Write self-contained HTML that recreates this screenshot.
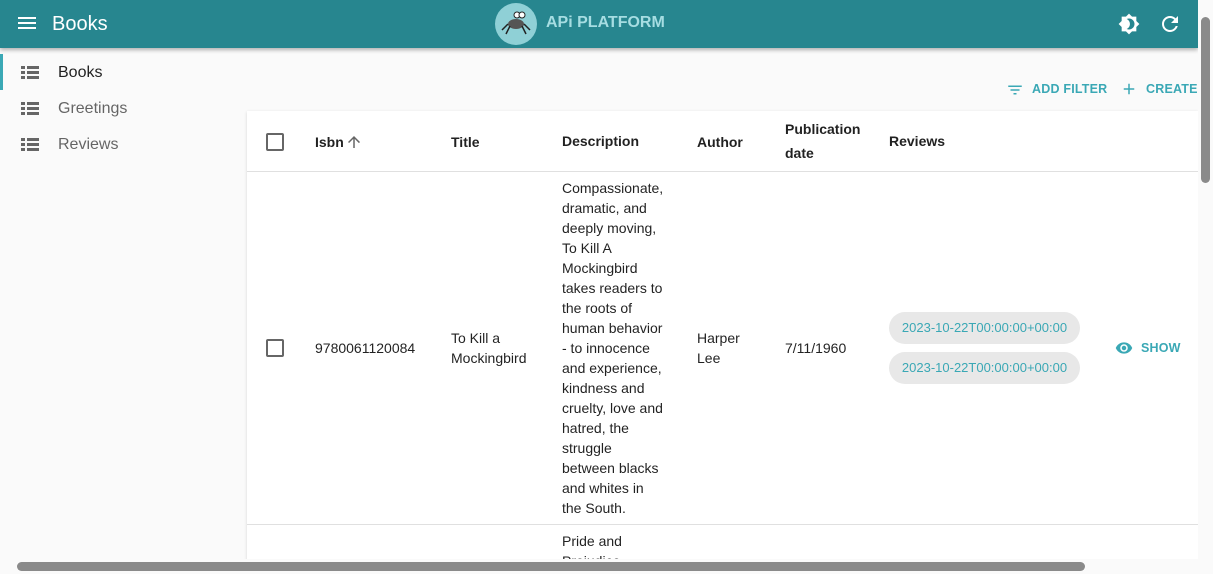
<!DOCTYPE html>
<html><head><meta charset="utf-8"><style>
*{box-sizing:border-box;margin:0;padding:0}
body{width:1213px;height:574px;overflow:hidden;background:#fafafa;font-family:"Liberation Sans",sans-serif;font-size:14px;color:rgba(0,0,0,.87);position:relative}
.hdr{position:absolute;left:0;top:0;width:1198px;height:48px;background:#27868f;box-shadow:0 2px 4px rgba(0,0,0,.3);color:#fff}
.abs{position:absolute}
.nav{position:absolute;left:0;height:36px;width:240px;font-size:16px;color:rgba(0,0,0,.6)}
.nav span{position:absolute;left:58px;top:10px}
.li{position:absolute;left:21px;top:12px;width:18px;height:14px}
.li i{position:absolute;height:3px;background:#666;top:0}
.card{position:absolute;left:247px;top:111px;width:951px;height:460px;background:#fff;box-shadow:0 1px 3px rgba(0,0,0,.15)}
.th{position:absolute;font-weight:bold;color:rgba(0,0,0,.87)}
.cb{position:absolute;width:18px;height:18px;border:2px solid #666;border-radius:2px}
.chip{position:absolute;left:642px;width:191px;height:32px;border-radius:16px;background:#e8e8e8;color:#3aa8b5;font-size:13px;line-height:32px;text-align:center}
.teal{color:#3aa8b5;font-weight:bold;font-size:12.5px;letter-spacing:.2px}
</style></head><body>
<div class="hdr">
 <div class="abs" style="left:18px;top:17px;width:18px;height:2px;background:#fff;box-shadow:0 5px 0 #fff,0 10px 0 #fff"></div>
 <div class="abs" style="left:52px;top:13px;font-size:20px">Books</div>
 <div class="abs" style="left:495px;top:3px;width:42px;height:42px;border-radius:50%;background:#8fd0d6"></div>
 <svg class="abs" style="left:498px;top:8px" width="36" height="30" viewBox="0 0 36 30"><ellipse cx="18" cy="16" rx="8" ry="5" fill="#555"/><circle cx="19" cy="7" r="3" fill="#fff" stroke="#222"/><circle cx="24" cy="7" r="3" fill="#fff" stroke="#222"/><path d="M10 16 L4 22 M12 18 L8 26 M24 18 L28 26 M26 16 L32 22" stroke="#222" stroke-width="1.5" fill="none"/></svg>
 <div class="abs" style="left:546px;top:14px;font-size:16px;font-weight:bold;color:#a6dde2;letter-spacing:0">APi PLATFORM</div>
 <svg class="abs" style="left:1118px;top:13px" width="22" height="22" viewBox="0 0 24 24"><path fill="#fff" d="M20 8.69V4h-4.69L12 .69 8.69 4H4v4.69L.69 12 4 15.31V20h4.69L12 23.31 15.31 20H20v-4.69L23.31 12 20 8.69zM12 18c-.89 0-1.74-.2-2.5-.55C11.56 16.5 13 14.42 13 12s-1.44-4.5-3.5-5.45C10.26 6.2 11.11 6 12 6c3.310 0 6 2.69 6 6s-2.69 6-6 6z"/></svg>
 <svg class="abs" style="left:1158px;top:12px" width="24" height="24" viewBox="0 0 24 24"><path fill="#fff" d="M17.65 6.35C16.2 4.9 14.21 4 12 4c-4.42 0-7.99 3.58-7.99 8s3.57 8 7.99 8c3.73 0 6.84-2.550 7.730-6h-2.08c-.82 2.33-3.04 4-5.65 4-3.31 0-6-2.69-6-6s2.69-6 6-6c1.66 0 3.14.69 4.22 1.78L13 11h7V4l-2.35 2.35z"/></svg>
</div>
<div class="abs" style="left:0;top:54px;width:3px;height:36px;background:#3aa8b5"></div>
<div class="nav" style="top:54px;color:rgba(0,0,0,.87)"><div class="li"><i style="left:0;width:4px"></i><i style="left:6px;width:12px"></i><i style="left:0;width:4px;top:5px"></i><i style="left:6px;width:12px;top:5px"></i><i style="left:0;width:4px;top:10px"></i><i style="left:6px;width:12px;top:10px"></i></div><span>Books</span></div>
<div class="nav" style="top:90px"><div class="li"><i style="left:0;width:4px"></i><i style="left:6px;width:12px"></i><i style="left:0;width:4px;top:5px"></i><i style="left:6px;width:12px;top:5px"></i><i style="left:0;width:4px;top:10px"></i><i style="left:6px;width:12px;top:10px"></i></div><span>Greetings</span></div>
<div class="nav" style="top:126px"><div class="li"><i style="left:0;width:4px"></i><i style="left:6px;width:12px"></i><i style="left:0;width:4px;top:5px"></i><i style="left:6px;width:12px;top:5px"></i><i style="left:0;width:4px;top:10px"></i><i style="left:6px;width:12px;top:10px"></i></div><span>Reviews</span></div>
<svg class="abs" style="left:1006px;top:81px" width="18" height="18" viewBox="0 0 24 24"><path fill="#3aa8b5" d="M10 18h4v-2h-4v2zM3 6v2h18V6H3zm3 7h12v-2H6v2z"/></svg>
<div class="abs teal" style="left:1032px;top:82px">ADD FILTER</div>
<svg class="abs" style="left:1120px;top:80px" width="18" height="18" viewBox="0 0 24 24"><path fill="#3aa8b5" d="M19 13h-6v6h-2v-6H5v-2h6V5h2v6h6v2z"/></svg>
<div class="abs teal" style="left:1146px;top:82px">CREATE</div>
<div class="card">
 <div class="cb" style="left:19px;top:22px"></div>
 <div class="th" style="left:68px;top:23px">Isbn</div>
 <svg class="abs" style="left:98px;top:22px" width="18" height="18" viewBox="0 0 24 24"><path fill="#666" d="M4 12l1.41 1.41L11 7.83V20h2V7.83l5.58 5.59L20 12l-8-8-8 8z"/></svg>
 <div class="th" style="left:204px;top:23px">Title</div>
 <div class="th" style="left:315px;top:22px">Description</div>
 <div class="th" style="left:450px;top:23px">Author</div>
 <div class="th" style="left:538px;top:6px;line-height:24px">Publication<br>date</div>
 <div class="th" style="left:642px;top:22px">Reviews</div>
 <div class="abs" style="left:0;top:60px;width:951px;height:1px;background:#e0e0e0"></div>
 <div class="cb" style="left:19px;top:228px"></div>
 <div class="abs" style="left:68px;top:229px">9780061120084</div>
 <div class="abs" style="left:204px;top:217px;line-height:20px">To Kill a<br>Mockingbird</div>
 <div class="abs" style="left:315px;top:67px;width:110px;line-height:20px">Compassionate,<br>dramatic, and<br>deeply moving,<br>To Kill A<br>Mockingbird<br>takes readers to<br>the roots of<br>human behavior<br>- to innocence<br>and experience,<br>kindness and<br>cruelty, love and<br>hatred, the<br>struggle<br>between blacks<br>and whites in<br>the South.</div>
 <div class="abs" style="left:450px;top:217px;line-height:20px">Harper<br>Lee</div>
 <div class="abs" style="left:538px;top:229px">7/11/1960</div>
 <div class="chip" style="top:201px">2023-10-22T00:00:00+00:00</div>
 <div class="chip" style="top:241px">2023-10-22T00:00:00+00:00</div>
 <svg class="abs" style="left:868px;top:228px" width="18" height="18" viewBox="0 0 24 24"><path fill="#3aa8b5" d="M12 4.5C7 4.5 2.73 7.61 1 12c1.73 4.39 6 7.5 11 7.5s9.27-3.11 11-7.5c-1.73-4.39-6-7.5-11-7.5zM12 17c-2.76 0-5-2.24-5-5s2.24-5 5-5 5 2.24 5 5-2.24 5-5 5zm0-8c-1.66 0-3 1.34-3 3s1.34 3 3 3 3-1.34 3-3-1.340-3-3-3z"/></svg>
 <div class="abs teal" style="left:894px;top:230px">SHOW</div>
 <div class="abs" style="left:0;top:413px;width:951px;height:1px;background:#e0e0e0"></div>
 <div class="abs" style="left:315px;top:420px;line-height:20px">Pride and<br>Prejudice</div>
</div>
<div class="abs" style="left:1198px;top:0;width:15px;height:574px;background:#fafafa"></div>
<div class="abs" style="left:1201px;top:17px;width:9px;height:166px;border-radius:5px;background:#8a8a8a"></div>
<div class="abs" style="left:0;top:559px;width:1198px;height:15px;background:#fafafa"></div>
<div class="abs" style="left:17px;top:562px;width:1068px;height:9px;border-radius:5px;background:#8a8a8a"></div>
</body></html>
